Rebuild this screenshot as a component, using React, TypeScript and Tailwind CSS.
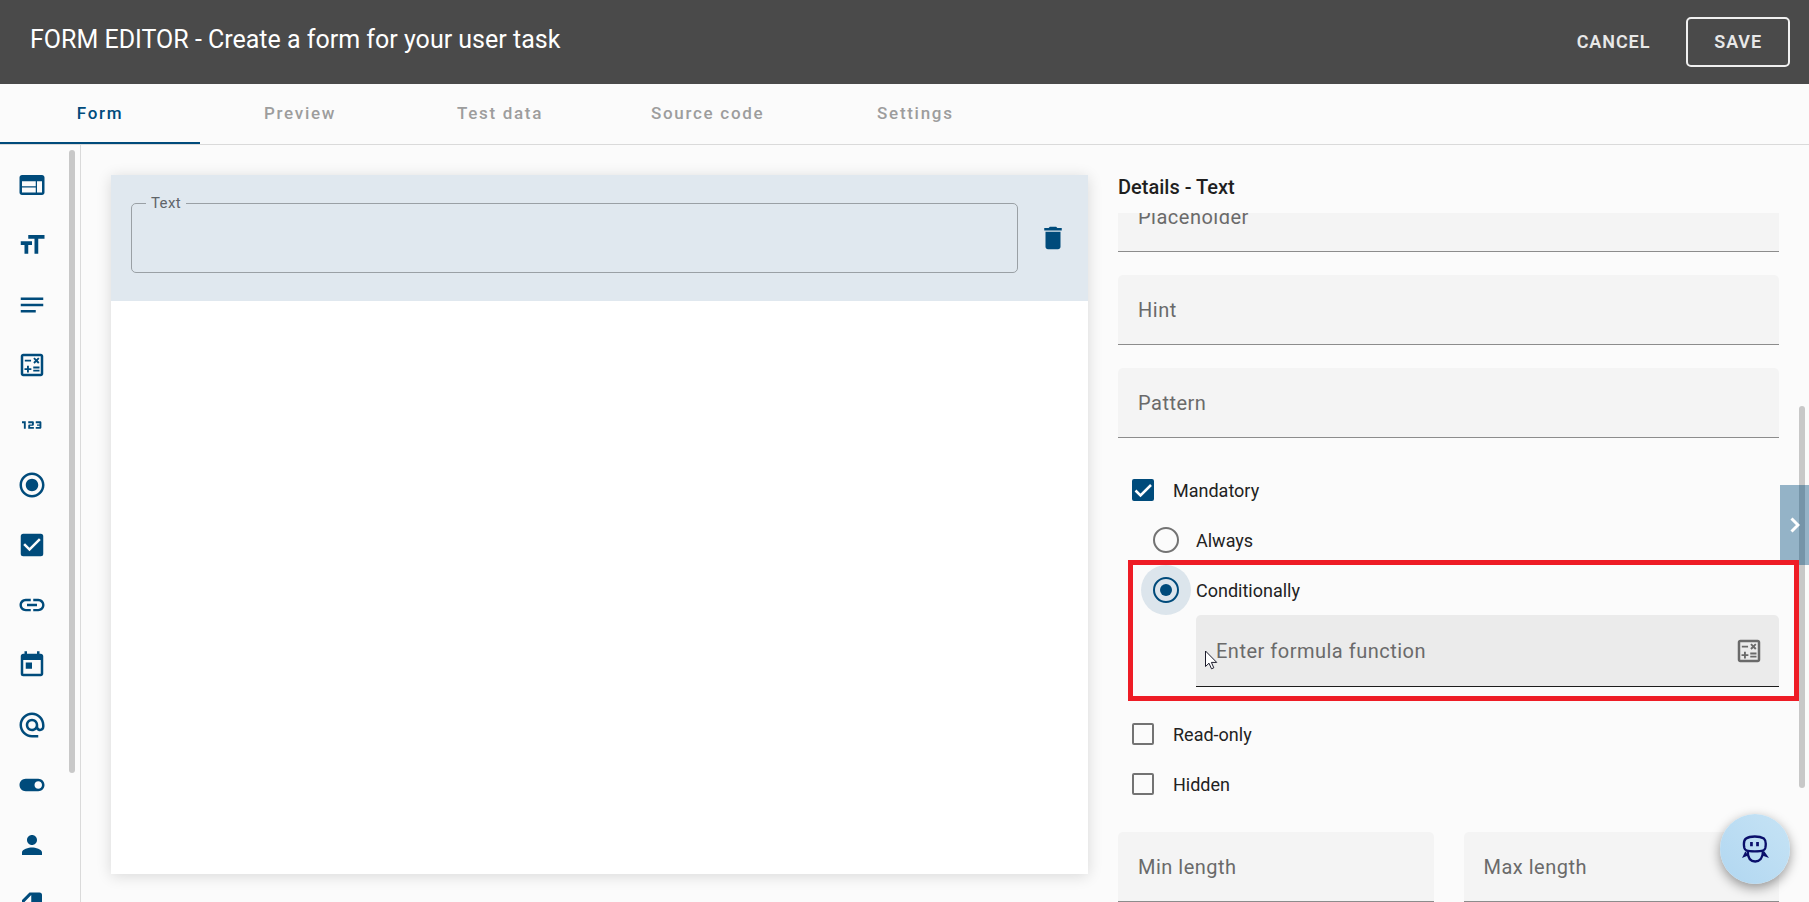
import { useState, type ComponentType, type ReactNode } from "react";
import {
  Md123,
  MdAlternateEmail,
  MdCheckBox,
  MdDelete,
  MdFormatSize,
  MdLink,
  MdNotes,
  MdOutlineCalculate,
  MdPerson,
  MdRadioButtonChecked,
  MdToday,
  MdToggleOn,
  MdWeb,
} from "react-icons/md";

type IconType = ComponentType<{ className?: string }>;

function FileIcon({ className }: { className?: string }) {
  return (
    <svg viewBox="0 0 24 24" fill="currentColor" className={className}>
      <path
        fillRule="evenodd"
        d="M10 2h8a2 2 0 0 1 2 2v16a2 2 0 0 1-2 2H6a2 2 0 0 1-2-2V8zM11.400 4L6 9.500h5.400z"
      />
    </svg>
  );
}

const tools: { label: string; Icon: IconType }[] = [
  { label: "Container", Icon: MdWeb },
  { label: "Heading", Icon: MdFormatSize },
  { label: "Paragraph", Icon: MdNotes },
  { label: "Formula", Icon: MdOutlineCalculate },
  { label: "Number", Icon: Md123 },
  { label: "Radio group", Icon: MdRadioButtonChecked },
  { label: "Checkbox", Icon: MdCheckBox },
  { label: "Link", Icon: MdLink },
  { label: "Date", Icon: MdToday },
  { label: "Email", Icon: MdAlternateEmail },
  { label: "Toggle", Icon: MdToggleOn },
  { label: "Person", Icon: MdPerson },
  { label: "File", Icon: FileIcon },
];

const tabs = ["Form", "Preview", "Test data", "Source code", "Settings"];

function Header() {
  return (
    <header className="flex h-[84px] shrink-0 items-center justify-between bg-[#4a4a4a] pr-[19px] pl-[30px]">
      <h1 className="pb-1 text-[25px] leading-8 text-white">
        FORM EDITOR - Create a form for your user task
      </h1>
      <div className="flex items-center gap-2 text-[18px] font-semibold tracking-wider text-[#e8e8e8]">
        <button className="h-[50px] px-7 pb-0.5">CANCEL</button>
        <button className="h-[50px] rounded-[5px] border-2 border-[#f0f0f0] px-[26px] pb-0.5">SAVE</button>
      </div>
    </header>
  );
}

function Tabs() {
  const [active, setActive] = useState("Form");
  return (
    <nav role="tablist" className="flex h-[61px] shrink-0 border-b border-[#dadada]">
      {tabs.map((tab) => (
        <button
          key={tab}
          role="tab"
          aria-selected={tab === active}
          onClick={() => setActive(tab)}
          className={
            "min-w-[200px] border-b-2 px-[51px] pt-0.5 text-[17px] font-medium tracking-widest " +
            (tab === active ? "border-[#004b7b] text-[#004b7b]" : "border-transparent text-[#9d9d9d]")
          }
        >
          {tab}
        </button>
      ))}
    </nav>
  );
}

function Toolbox() {
  return (
    <aside className="relative w-[81px] shrink-0 overflow-hidden border-r border-[#dadada] pt-[10px]">
      <ul>
        {tools.map(({ label, Icon }) => (
          <li key={label}>
            <button aria-label={label} className="flex h-[60px] w-16 items-center justify-center text-[#004b7b]">
              <Icon className="size-[30px]" />
            </button>
          </li>
        ))}
      </ul>
      <div className="absolute top-[5px] right-[5px] h-[623px] w-[6px] rounded-full bg-[#c8c8c8]" />
    </aside>
  );
}

function Canvas() {
  return (
    <section className="mt-[30px] mb-7 min-w-0 bg-white shadow-[0_2px_14px_rgba(0,0,0,0.14)]">
      <div className="flex items-end gap-5 bg-[#e0e8ef] px-5 pt-[19px] pb-7">
        <fieldset className="min-w-0 flex-1 rounded-[5px] border border-[#9aa0a5]">
          <legend className="ml-[14px] px-[5px] text-[15px] leading-[18px] tracking-wide text-[#5f6469]">
            <label htmlFor="text">Text</label>
          </legend>
          <input id="text" className="block h-[60px] w-full bg-transparent px-5 text-[20px] outline-none" />
        </fieldset>
        <button aria-label="Delete" className="flex h-[70px] w-[30px] items-center text-[#004b7b]">
          <MdDelete className="size-[30px]" />
        </button>
      </div>
    </section>
  );
}

function Field({ label }: { label: string }) {
  return (
    <label className="flex h-[70px] min-w-0 flex-1 shrink-0 items-center gap-3 rounded-t-[5px] border-b border-[#8c8c8c] bg-[#f4f4f4] px-5 text-[20px] tracking-wide text-[#6a6a6a]">
      <span className="whitespace-nowrap">{label}</span>
      <input className="min-w-0 flex-1 bg-transparent outline-none" />
    </label>
  );
}

function CheckRow({ label, defaultChecked }: { label: string; defaultChecked?: boolean }) {
  return (
    <label className="flex h-[50px] w-fit items-center gap-[19px] pl-[14px] text-[18px] text-[#222222]">
      <span className="grid">
        <input
          type="checkbox"
          defaultChecked={defaultChecked}
          className="peer col-start-1 row-start-1 size-[22px] appearance-none rounded-[2px] border-2 border-[#737373] checked:border-[#004b7b] checked:bg-[#004b7b]"
        />
        <svg
          viewBox="0 0 22 22"
          className="pointer-events-none col-start-1 row-start-1 hidden size-[22px] fill-none stroke-white stroke-[2.500] peer-checked:block"
        >
          <path d="M3.500 11.500L8.500 16.500L19 6" />
        </svg>
      </span>
      {label}
    </label>
  );
}

function RadioRow({ label, defaultChecked }: { label: string; defaultChecked?: boolean }) {
  return (
    <label className="flex h-[50px] w-fit items-center gap-[5px] pl-[23px] text-[18px] text-[#222222]">
      <span className="grid size-[50px] place-items-center rounded-full has-checked:bg-[#dce5ec]">
        <input
          type="radio"
          name="mandatory-mode"
          defaultChecked={defaultChecked}
          className="peer col-start-1 row-start-1 size-[26px] appearance-none rounded-full border-2 border-[#737373] checked:border-[#004b7b]"
        />
        <span className="pointer-events-none col-start-1 row-start-1 hidden size-[12px] rounded-full bg-[#004b7b] peer-checked:block" />
      </span>
      {label}
    </label>
  );
}

function Pointer() {
  return (
    <svg
      viewBox="0 0 13 20"
      className="pointer-events-none absolute top-[35px] left-[9px] h-5 w-[13px] fill-white stroke-[#1c1c2c] stroke-1"
    >
      <path d="M.5 1v15.500l3.500-3.300 2.500 5.600 2.300-1-2.400-5.400h5.300z" />
    </svg>
  );
}

function Highlight({ children }: { children: ReactNode }) {
  return (
    <div className="relative">
      {children}
      <div className="pointer-events-none absolute -top-[5px] -right-5 -bottom-[14px] left-[10px] z-20 border-[5px] border-[#ee1c25]" />
    </div>
  );
}

function Details() {
  return (
    <section className="flex min-h-0 min-w-0 flex-col pt-[30px]">
      <h2 className="text-[20px] leading-6 font-medium text-[#1f1f1f]">Details - Text</h2>
      <div className="-mr-[30px] mt-[14px] min-h-0 flex-1 overflow-hidden pr-[30px]">
        <div className="-mt-[31px] flex flex-col">
          <div className="grid gap-[23px]">
            <Field label="Placeholder" />
            <Field label="Hint" />
            <Field label="Pattern" />
          </div>
          <div className="mt-[27px]">
            <CheckRow label="Mandatory" defaultChecked />
            <RadioRow label="Always" />
            <Highlight>
              <RadioRow label="Conditionally" defaultChecked />
              <div className="relative ml-[78px] flex h-[72px] items-center rounded-t-[5px] border-b border-[#1c1c1c] bg-[#ebebeb] pr-[15px] pl-5 text-[20px] tracking-wide text-[#6a6a6a]">
                <label htmlFor="formula" className="whitespace-nowrap">
                  Enter formula function
                </label>
                <input id="formula" className="min-w-0 flex-1 bg-transparent outline-none" />
                <button aria-label="Open formula editor">
                  <MdOutlineCalculate className="size-[30px]" />
                </button>
                <Pointer />
              </div>
            </Highlight>
          </div>
          <div className="mt-[22px]">
            <CheckRow label="Read-only" />
            <CheckRow label="Hidden" />
          </div>
          <div className="mt-[23px] flex gap-[30px]">
            <Field label="Min length" />
            <Field label="Max length" />
          </div>
        </div>
      </div>
    </section>
  );
}

function AssistantButton() {
  return (
    <button
      aria-label="Assistant"
      className="absolute right-[19px] bottom-[18px] z-30 flex size-[70px] items-center justify-center rounded-full bg-linear-to-bl from-[#c6e3f5] to-[#b1d7f1] shadow-[0_4px_12px_rgba(0,0,0,0.4)]"
    >
      <svg viewBox="0 0 80 82" className="h-[28px] w-[27px] fill-none stroke-[#0a0f6b] stroke-[7]">
        <path d="M38 4C28 4 18 6 12 10C5 15 5 28 7 38C9 46 14 48 38 48S67 46 69 38C71 28 71 15 65 10C58 6 48 4 38 4Z" />
        <path d="M17 48C17 68 26 78 39 78S62 68 62 48" />
        <path d="M28 20v13M46 20v13" className="stroke-[8]" />
        <path d="M10 48L0 68L18 60ZM66 48L80 68L60 60Z" className="fill-[#0a0f6b] stroke-none" />
      </svg>
    </button>
  );
}

export default function App() {
  return (
    <div className="relative flex h-screen flex-col overflow-hidden bg-[#fbfbfb] font-[Roboto,sans-serif]">
      <Header />
      <Tabs />
      <div className="flex min-h-0 flex-1">
        <Toolbox />
        <main className="relative grid min-w-0 flex-1 grid-cols-[minmax(0,977fr)_minmax(0,661fr)] grid-rows-[minmax(0,1fr)] gap-[30px] px-[30px]">
          <Canvas />
          <Details />
          <div className="absolute top-[261px] right-1 h-[382px] w-[6px] rounded-full bg-[#c8c8c8]" />
          <button
            aria-label="Collapse details"
            className="absolute top-[340px] right-0 z-10 flex h-20 w-[29px] items-center justify-center bg-[#004c7c]/41 text-white"
          >
            <svg viewBox="0 0 10 16" className="h-4 w-[10px] fill-none stroke-current stroke-[3]">
              <path d="M1.500 1.500L8 8L1.500 14.500" />
            </svg>
          </button>
        </main>
      </div>
      <AssistantButton />
    </div>
  );
}
